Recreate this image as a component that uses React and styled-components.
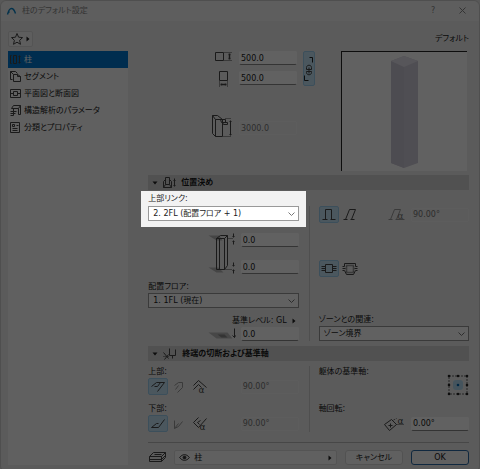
import styled, { createGlobalStyle } from "styled-components"
import { useState } from "react"

const menu=[
    {nome:'柱',icone:'coluna'},
    {nome:'セグメント',icone:'segmento'},
    {nome:'平面図と断面図',icone:'planta'},
    {nome:'構造解析のパラメータ',icone:'analise'},
    {nome:'分類とプロパティ',icone:'lista'},
]

const desenhos={
    logo:[9,8,<path d="M0 7C1 3 2 1 4 1s3 2 4 5M0 6l2-2" stroke="#0a84c8" strokeWidth="1.4"/>],
    estrela:[12,12,<path d="M5.500 0l1.600 3.700 4 .4-3 2.700.9 4-3.500-2.100L2 10.800l.9-4L0 4.100l4-.4z"/>],
    coluna:[11,11,<path d="M3 1h3v8H3zM0 1v8M0 1h1M0 9h1M9 1v8M8 2h2M8 8h2"/>],
    segmento:[11,11,<path d="M2 8H0V0h5l2 2M3 10V3h4l3 2v5zM0 0l3 3M7 3v2h3"/>],
    planta:[11,11,<><path d="M0 1h10v8H0z"/><path d="M3 3h4v4H3zM0 5h3M7 5h3"/></>],
    analise:[11,11,<path d="M1 3l2-3h7v9H8V3H1M3 10V3M0 6h6M0 8h5M8 3l2-3M0 10h3"/>],
    lista:[11,11,<path d="M0 0h9v10H0zM2 2h2v2H2zM6 3h2M2 6h5M2 8h5"/>],
    altura:[18,12,<><path d="M1 1h8v8H1z"/><path d="M10 1h7M10 9h7" strokeDasharray="1 1"/><path d="M15 2v6M14 3h2M14 7h2" strokeWidth="1.400"/></>],
    largura:[18,17,<><path d="M5 0h8v9H5z"/><path d="M5 10v5M13 10v5" strokeDasharray="1 1"/><path d="M6 13h6M7 12v2M11 12v2" strokeWidth="1.400"/></>],
    coluna3d:[22,24,<><path d="M0 1h5l5 4v17H3L0 19zM0 1l3 4h7M3 5v17"/><path d="M8 5h5v3H9zM10 8h5v2h-4z"/><path d="M13 4h6M11 22h7" strokeDasharray="1 1"/><path d="M18 6v15M17 7h2M17 20h2"/></>],
    elo:[10,28,<><path d="M0 20v5h4M8 7V2H5" stroke="#222"/><path d="M2 12c0-3 5-3 5 0v2H2zM2 17c0 3 5 3 5 0v-1H2zM4.500 12v6"/></>],
    posicao:[13,12,<><path d="M2 0h4v7H2zM2 2L0 4v6h8V4L6 2M0 10l2-3M8 10L6 7"/><path d="M11 1v8M10 3h2M10 8h2"/></>],
    eixo:[14,12,<><path d="M6 0v7l6 0V1M0 4l5 6M5 6l-4 5M9 7v3"/><path d="M0 8h5" strokeDasharray="1 1"/></>],
    deslocar:[30,41,<><path d="M1 2h11l3 5H9zM1 34h10l5 5H9z" fill="#b5b5b5" stroke="none"/><path d="M9 5l4-3h7l-3 3zM9 5h8v31H9zM17 36l3-4V2M12 5v31"/><path d="M20 5h5M17 36h8" strokeDasharray="1 1"/><path d="M26 0v4M25 3h2M26 11V7M25 8h2M26 29v4M25 32h2M26 40v-4M25 37h2"/></>],
    nivel:[28,13,<><path d="M0 4h19l5 6H8z" fill="#bbb" stroke="none"/><path d="M9 6h7l3 3h-6z" fill="#888" stroke="none"/><path d="M26 0v9M24 7l2 2 1-2"/></>],
    reto:[14,14,<path d="M3 11V1h6v10M0 11h5M8 11h5"/>],
    inclinado:[14,14,<path d="M2 11L6 1h6L8 11M0 11h4M7 11h4"/>],
    angulo:[18,14,<><path d="M2 11L6 1h6L8 11M0 11h4M7 11h9" stroke="#999"/><text x="9" y="10" opacity=".7">α</text></>],
    nucleo:[16,12,<><path d="M4 1h7v8H4z"/><path d="M0 3h4M0 5h4M0 7h4M11 3h4M11 5h4M11 7h4"/></>],
    envolto:[16,14,<><path d="M0 4h2V1h11v3h2M0 8h2l2 4h7l2-4h2M0 6h3M12 6h3"/><path d="M4 3h7v7H4z" strokeDasharray="1 1" strokeWidth="1.600"/></>],
    topo1:[14,12,<path d="M0 5l5-4h8L6 10M3 5h3l3-4"/>],
    topo2:[12,14,<path d="M1 5l4-3h4v5l-5 5M5 5l-3 4" stroke="#999"/>],
    topo3:[14,14,<><path d="M0 5l5-5 8 7M0 9l5-5 3 3"/><text x="5" y="12">α</text></>],
    base1:[14,12,<path d="M0 9h7l6-8M0 9l5-4M5 5h2"/>],
    base2:[12,14,<path d="M1 3v8l4-2 4-5M1 11l4-5" stroke="#999"/>],
    base3:[14,14,<><path d="M5 0L0 5l5 5 8-9M7 3L4 5l2 2"/><text x="6" y="12">α</text></>],
    girar:[22,14,<><path d="M0 7l7-5 5 5-7 6zM4 8h4M6 6v4"/><path d="M8 3l4-2M12 7h8" strokeDasharray="1 1"/><text x="13" y="6">α</text></>],
    camadas:[17,11,<path d="M0 4l4-4h12l-4 4zM0 4v5h12V4M12 9l4-4V0M0 7h12l4-4M5 2h7"/>],
    olho:[11,9,<><path d="M0 4Q5-2 10 4Q5 10 0 4z"/><circle cx="5" cy="4" r="1.500" fill="#333"/></>],
    seta:[4,6,<path d="M0 0l3 2.500L0 5z" fill="#222" stroke="none"/>],
    aberto:[6,4,<path d="M0 0h5L2.500 3z" fill="#222" stroke="none"/>],
    baixo:[7,5,<path d="M0 1l3 3 3-3"/>],
    fechar:[8,8,<path d="M0 0l6 6M6 0L0 6" stroke="#888"/>],
}

function Icone({nome}){
    const [w,h,desenho]=desenhos[nome]
    return <Svg width={w} height={h} viewBox={`-0.5 -0.5 ${w} ${h}`} aria-hidden="true">{desenho}</Svg>
}

function Lista({id,valor}){
    return(
    <Caixa>
        <Selecao id={id} defaultValue={valor}><option>{valor}</option></Selecao>
        <Icone nome='baixo'/>
    </Caixa>
    )
}

function Opcoes({nomes,rotulos}){
    const [ativo,setAtivo]=useState(0)
    return nomes.map((n,i)=>
        <Alternar key={n} aria-label={rotulos[i]} aria-pressed={ativo==i} $ativo={ativo==i} onClick={()=>setAtivo(i)}>
            <Icone nome={n}/>
        </Alternar>
    )
}

function Previa(){
    return(
    <Quadro>
        <svg width="27" height="112" viewBox="0 0 27 112" role="img" aria-label="柱">
            <path d="M0 5L13 0l14 5v102l-14 5-13-5z" fill="#d0ccd9"/>
            <path d="M0 5l13 6v101l-13-5z" fill="#cbc7d5"/>
            <path d="M0 5L13 0l14 5-14 6z" fill="#e4e2ec"/>
        </svg>
    </Quadro>
    )
}

export default function App(){
    const [pag,setPag]=useState(0)
    return(
    <Janela>
        <Global/>
        <Titulo>
            <Icone nome='logo'/>
            <h1>柱のデフォルト設定</h1>
            <Simples aria-label="ヘルプ">?</Simples>
            <Simples aria-label="閉じる"><Icone nome='fechar'/></Simples>
        </Titulo>
        <Topo>
            <Favorito aria-label="お気に入り"><Icone nome='estrela'/><Icone nome='seta'/></Favorito>
            <span>デフォルト</span>
        </Topo>
        <Corpo>
            <Menu>
                {menu.map((m,i)=>
                <Item key={m.nome} $ativo={pag==i} onClick={()=>setPag(i)}>
                    <Icone nome={m.icone}/>{m.nome}
                </Item>)}
            </Menu>
            <Conteudo>
                <Geral>
                    <Medidas>
                        <Icone nome='altura'/>
                        <Campo aria-label="高さ" defaultValue="500.0"/>
                        <Icone nome='largura'/>
                        <Campo aria-label="幅" defaultValue="500.0"/>
                        <Icone nome='coluna3d'/>
                        <Campo aria-label="柱の高さ" defaultValue="3000.0" disabled/>
                    </Medidas>
                    <Elo aria-label="連動" aria-pressed="true"><Icone nome='elo'/></Elo>
                    <Previa/>
                </Geral>

                <Faixa><Icone nome='aberto'/><Icone nome='posicao'/>位置決め</Faixa>
                <Secao>
                    <Esquerda>
                        <Destaque>
                            <label htmlFor="topo">上部リンク:</label>
                            <Lista id="topo" valor="2. 2FL (配置フロア + 1)"/>
                        </Destaque>
                        <Deslocar>
                            <Icone nome='deslocar'/>
                            <Pilha>
                                <Campo aria-label="上部オフセット" defaultValue="0.0"/>
                                <Campo aria-label="下部オフセット" defaultValue="0.0"/>
                            </Pilha>
                        </Deslocar>
                        <Rotulo htmlFor="piso">配置フロア:</Rotulo>
                        <Lista id="piso" valor="1. 1FL (現在)"/>
                        <Base>
                            <label htmlFor="nivel">基準レベル: GL</label>
                            <Simples aria-label="基準レベル"><Icone nome='seta'/></Simples>
                        </Base>
                        <Linha $fim>
                            <Icone nome='nivel'/>
                            <Campo id="nivel" defaultValue="0.0"/>
                        </Linha>
                    </Esquerda>
                    <Direita $topo={15}>
                        <Linha>
                            <Opcoes nomes={['reto','inclinado']} rotulos={['垂直','傾斜']}/>
                            <Vao/>
                            <Icone nome='angulo'/>
                            <Campo aria-label="傾斜角度" defaultValue="90.00°" disabled/>
                        </Linha>
                        <Linha>
                            <Opcoes nomes={['nucleo','envolto']} rotulos={['躯体','包絡']}/>
                        </Linha>
                        <div>
                            <Rotulo htmlFor="zona">ゾーンとの関連:</Rotulo>
                            <Lista id="zona" valor="ゾーン境界"/>
                        </div>
                    </Direita>
                </Secao>

                <Faixa><Icone nome='aberto'/><Icone nome='eixo'/>終端の切断および基準軸</Faixa>
                <Secao>
                    <Esquerda $topo={4}>
                        <Rotulo htmlFor="angTopo">上部:</Rotulo>
                        <Linha>
                            <Opcoes nomes={['topo1','topo2','topo3']} rotulos={['水平','垂直','角度']}/>
                            <Vao/>
                            <Campo id="angTopo" defaultValue="90.00°" disabled/>
                        </Linha>
                        <Rotulo htmlFor="angBase" $topo={8}>下部:</Rotulo>
                        <Linha>
                            <Opcoes nomes={['base1','base2','base3']} rotulos={['水平','垂直','角度']}/>
                            <Vao/>
                            <Campo id="angBase" defaultValue="90.00°" disabled/>
                        </Linha>
                    </Esquerda>
                    <Direita $topo={4}>
                        <Ancora>
                            <span>躯体の基準軸:</span>
                            <svg width="22" height="22" viewBox="0 0 22 22" role="img" aria-label="基準点">
                                <rect x="6" y="6" width="10" height="10" rx="3" fill="#b5ddf5"/>
                                <path d="M2 2h18v18H2z" fill="none" stroke="#666" strokeDasharray="2 1"/>
                                {[2,11,20].map(y=>[2,11,20].map(x=>
                                    <circle key={x+'-'+y} cx={x} cy={y} r="1.300" fill={x==11&&y==11?'#0067b0':'#222'}/>
                                ))}
                            </svg>
                        </Ancora>
                        <div>
                            <Rotulo htmlFor="giro">軸回転:</Rotulo>
                            <Linha $fim $alta>
                                <Icone nome='girar'/>
                                <Campo id="giro" defaultValue="0.00°"/>
                            </Linha>
                        </div>
                    </Direita>
                </Secao>

                <Rodape>
                    <Icone nome='camadas'/>
                    <Camada><Icone nome='olho'/><span>柱</span><Icone nome='seta'/></Camada>
                    <Botao>キャンセル</Botao>
                    <Botao $principal>OK</Botao>
                </Rodape>
            </Conteudo>
        </Corpo>
    </Janela>
    )
}

const Global=createGlobalStyle`
*{box-sizing:border-box;}
body{margin:0;background:#e8e8e8;}
body,button,input,select{
font-family:"DejaVu Sans","Noto Sans CJK JP",sans-serif;
font-size:8px;line-height:12px;color:#1a1a1a;
font-feature-settings:"palt";
}
button{padding:0;border:0;background:none;cursor:pointer;}
`
const Svg=styled.svg`
flex:none;fill:none;stroke:#444;overflow:visible;
text{font-size:9px;fill:#444;stroke:none;}
`
const Janela=styled.main`
min-height:100vh;background:#f0f0f0;
border:1px solid #d0d0d0;border-radius:6px;
display:flex;flex-direction:column;
`
const Titulo=styled.header`
height:20px;padding:0 11px 0 6px;background:#f7f7f7;
border-radius:6px 6px 0 0;
display:flex;align-items:center;
h1{font-size:8px;font-weight:400;color:#888;margin:0 auto 0 6px;}
button{color:#888;margin-left:20px;}
`
const Simples=styled.button`
min-width:10px;
display:flex;justify-content:center;align-items:center;
`
const Topo=styled.div`
height:30px;padding:6px 10px 0 7px;
display:flex;justify-content:space-between;align-items:center;
`
const Favorito=styled.button`
height:16px;width:25px;background:#f8f8f8;
border:1px solid #ddd;border-radius:2px;
display:flex;justify-content:space-evenly;align-items:center;
`
const Corpo=styled.div`
flex:1;padding:0 10px 6px 7px;
display:grid;grid-template-columns:3fr 8fr;gap:20px;
`
const Menu=styled.nav`
background:#fcfcfc;
`
const Item=styled.button`
width:100%;height:17px;padding-left:2px;gap:3px;
display:flex;align-items:center;white-space:nowrap;
background:${p=>p.$ativo?'#0078d0':'transparent'};
color:${p=>p.$ativo?'#fff':'#1a1a1a'};
`
const Conteudo=styled.div`
min-width:0;display:flex;flex-direction:column;
`
const Geral=styled.div`
height:124px;padding:0 2px 4px 0;
display:flex;align-items:flex-start;
`
const Medidas=styled.div`
flex:1;margin-right:6px;
display:grid;grid-template-columns:22px 58px;
grid-template-rows:20px 43px 24px;
justify-content:end;gap:0 5px;
input:disabled{margin-top:7px;}
svg{justify-self:center;}
`
const Campo=styled.input`
height:14px;width:58px;padding:0 0 0 1px;outline:none;
border:1px solid ${p=>p.disabled?'#f4f4f4':'#fff'};
border-bottom-color:${p=>p.disabled?'#f4f4f4':'#888'};border-radius:2px;
background:${p=>p.disabled?'#f0f0f0':'#fff'};
color:${p=>p.disabled?'#777':'#1a1a1a'};
`
const Elo=styled.button`
width:12px;height:35px;background:#c5e4f7;
border:1px solid #9fd0ee;border-radius:2px;
display:flex;justify-content:center;align-items:center;
`
const Quadro=styled.div`
width:126px;height:120px;margin-left:26px;background:#fff;
border-top:1px solid #222;border-left:1px solid #222;
display:flex;justify-content:center;align-items:center;
`
const Faixa=styled.h2`
height:15px;margin:0;padding-left:4px;gap:5px;
background:#d6d6d6;font-size:8px;font-weight:700;
display:flex;align-items:center;
`
const Secao=styled.section`
padding:1px 0 5px;
display:grid;grid-template-columns:1fr 1fr;
`
const Esquerda=styled.div`
padding-right:10px;margin-top:${p=>p.$topo||0}px;
`
const Direita=styled.div`
margin-top:${p=>p.$topo}px;padding-left:9px;
border-left:1px solid #d0d0d0;
display:flex;flex-direction:column;justify-content:space-between;
`
/* o campo em foco fica claro, a sombra escurece o resto */
const Destaque=styled.div`
position:relative;z-index:1;
margin:0 -7px 6px;height:36px;padding:2px 7px 0;
background:#f2f2f2;box-shadow:0 0 0 200vmax rgba(0,0,0,.62);
label{display:block;height:13px;}
`
const Caixa=styled.div`
position:relative;
svg{position:absolute;right:4px;top:5px;stroke:#777;pointer-events:none;}
`
const Selecao=styled.select`
appearance:none;display:block;width:100%;height:15px;
padding:0 14px 0 4px;border:1px solid #999;border-radius:0;
background:#fff;outline:none;
`
const Deslocar=styled.div`
height:41px;gap:4px;margin-bottom:7px;
display:flex;justify-content:flex-end;
`
const Pilha=styled.div`
display:flex;flex-direction:column;justify-content:space-between;
`
const Rotulo=styled.label`
display:block;height:12px;margin-top:${p=>p.$topo||0}px;
`
const Base=styled.div`
height:13px;margin-top:6px;
display:flex;justify-content:flex-end;align-items:center;
button{margin-left:2px;}
`
const Linha=styled.div`
min-height:${p=>p.$alta?17:14}px;gap:1px;
display:flex;align-items:center;
justify-content:${p=>p.$fim?'flex-end':'flex-start'};
svg + input{margin-left:4px;}
`
const Vao=styled.div`
flex:1;
`
const Alternar=styled.button`
width:20px;height:17px;border-radius:2px;
border:1px solid ${p=>p.$ativo?'#9fd0ee':'transparent'};
background:${p=>p.$ativo?'#c5e4f7':'transparent'};
display:flex;justify-content:center;align-items:center;
`
const Ancora=styled.div`
display:flex;justify-content:space-between;
svg{margin-top:8px;}
`
const Rodape=styled.footer`
margin-top:5px;padding:7px 0 0 1px;gap:8px;
border-top:1px solid #bbb;
display:flex;align-items:center;
`
const Camada=styled.button`
flex:1;height:15px;padding:0 4px;gap:4px;
background:#fbfbfb;border:1px solid #ddd;border-radius:2px;
display:flex;align-items:center;
span{flex:1;text-align:left;}
`
const Botao=styled.button`
width:58px;height:15px;background:#fbfbfb;border-radius:3px;
border:1px solid ${p=>p.$principal?'#2a6aa5':'#d8d8d8'};
`
